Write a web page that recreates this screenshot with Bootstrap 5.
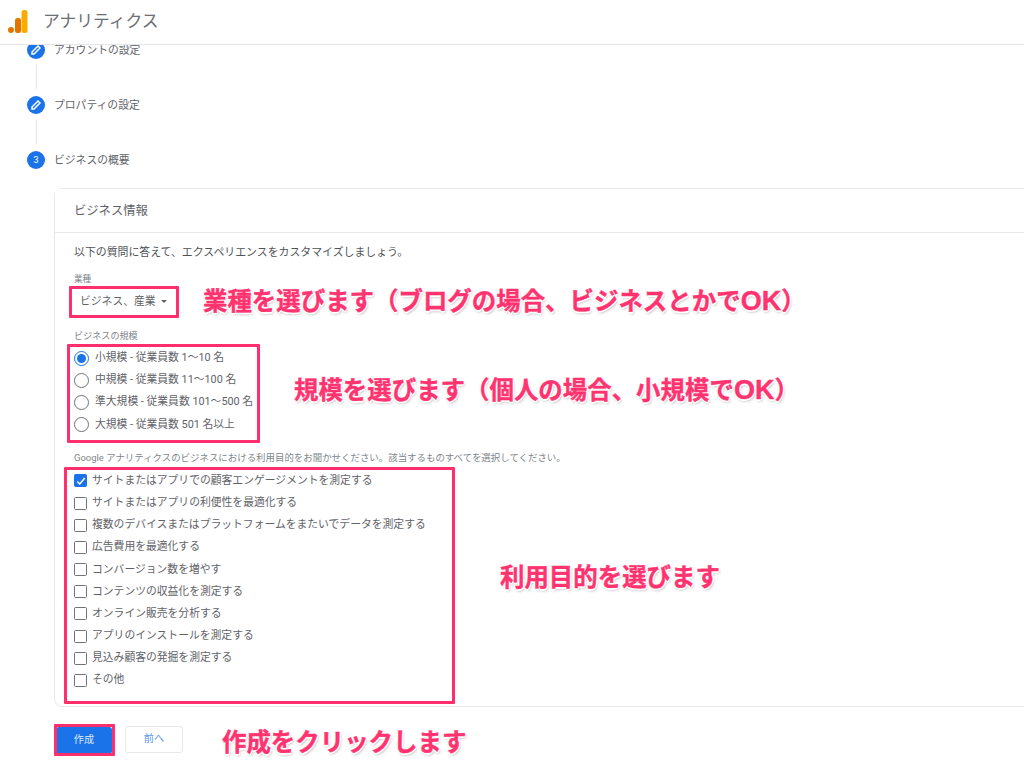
<!DOCTYPE html>
<html lang="ja">
<head>
  <meta charset="UTF-8" />
  <meta name="viewport" content="width=device-width, initial-scale=1.0" />
  <title>アナリティクス</title>
  <link href="https://cdn.jsdelivr.net/npm/bootstrap@5.3.3/dist/css/bootstrap.min.css" rel="stylesheet">
  <style>
    html, body { height: 774px; overflow: hidden; }
    body {
      position: relative;
      background: #fff;
      color: #5f6368;
      font-family: Roboto, "Noto Sans CJK JP", sans-serif;
      font-size: 10.8px;
    }
    /* top bar */
    .ga-top {
      position: relative;
      z-index: 2;
      height: 45px;
      padding-left: 8px;
      background: #fff;
      border-bottom: 1px solid #e3e5e8;
    }
    .ga-top-title { margin: 0 0 2px 15px; font-size: 16.8px; line-height: 1; color: #6b6f74; }

    /* stepper */
    .ga-main { margin-top: -4px; padding-left: 27px; }
    .ga-step { height: 18px; gap: 9px; line-height: 20px; }
    .ga-step-dot {
      width: 18px;
      height: 18px;
      flex: none;
      border-radius: 50%;
      background: #1a73e8;
      color: #fff;
      font-size: 9px;
    }
    .ga-step-line { width: 1px; height: 24px; margin: 6px 0 7px 9px; background: #e3e5e8; }

    /* business card */
    .ga-panel {
      margin: 19px -30px 0 27px;
      height: 519px;
      border: 1px solid #e6e8ea;
      border-radius: 8px;
      background: #fff;
    }
    .ga-panel .card-header {
      height: 44px;
      padding: 0 0 0 19px;
      line-height: 44px;
      font-size: 12.3px;
      color: #5f6368;
      background: #fff;
      border-bottom: 1px solid #e6e8ea;
    }
    .ga-panel .card-body { padding: 12px 0 0 19px; }
    .ga-intro { height: 16px; line-height: 16px; font-size: 10.9px; color: #4f5357; }
    .ga-label { font-size: 9.1px; line-height: 12px; color: #80868b; }
    .ga-label-kind { margin-top: 12px; font-size: 8.6px; }
    .ga-pick { height: 31px; margin: 1px 0 0 6px; gap: 4px; line-height: 31px; }
    .ga-caret { border-left: 3px solid transparent; border-right: 3px solid transparent; border-top: 3px solid #5f6368; margin-left: 1px; }
    .ga-label-size { margin-top: 13px; }
    .ga-radios { margin-top: 5px; }
    .ga-radio-row { height: 22.2px; gap: 6px; }
    .ga-radio {
      width: 15px;
      height: 15px;
      flex: none;
      border: 1.6px solid #6f7478;
      border-radius: 50%;
      background: #fff;
    }
    .ga-radio-on { border-color: #1a73e8; padding: 2px; background: #1a73e8 content-box; }
    .ga-label-use { margin-top: 16px; font-size: 9.45px; }
    .ga-checks { margin-top: 6px; }
    .ga-check-row { height: 22.2px; gap: 5px; }
    .ga-check {
      width: 13px;
      height: 13px;
      flex: none;
      border: 1.5px solid #6f7478;
      border-radius: 1.5px;
      background: #fff;
    }
    .ga-check-on { border-color: #1a73e8; background: #1a73e8; }

    /* buttons */
    .ga-actions { margin: 19px 0 0 29px; gap: 13px; }
    .ga-btn { height: 27px; padding: 0; border-radius: 3px; font-size: 10.2px; line-height: 1; }
    .ga-btn-go { width: 56px; margin-top: 1px; background: #1a73e8; border: 0; color: #dbe8fb; }
    .ga-btn-back { width: 58px; background: #fff; border: 1px solid #e6e8ea; color: #5b95ee; }

    /* pink annotations drawn over the screenshot */
    .ga-box { position: absolute; z-index: 3; border: 3px solid #ff2f6e; border-radius: 1px; }
    .ga-note {
      position: absolute;
      z-index: 3;
      margin: 0;
      font-family: "Noto Sans CJK JP", sans-serif;
      font-size: 24.45px;
      font-weight: 700;
      line-height: 1;
      white-space: nowrap;
      color: #ff3370;
      -webkit-text-stroke: .4px #ff3370;
      text-shadow: 1.5px 0 #fff, -1.5px 0 #fff, 0 1.5px #fff, 0 -1.5px #fff, 1px 1px #fff, -1px 1px #fff, 1px -1px #fff, -1px -1px #fff, 1px 2px 3px rgba(0,0,0,.35);
    }
    .ga-ok { font-family: "Liberation Sans", sans-serif; font-size: 27px; line-height: 0; }
    .ga-box-kind { left: 69px; top: 286px; width: 110px; height: 32px; }
    .ga-box-size { left: 67px; top: 344px; width: 193px; height: 99px; }
    .ga-box-use { left: 64px; top: 467px; width: 391px; height: 237px; }
    .ga-box-go { left: 54px; top: 724px; width: 61px; height: 32px; }
    .ga-note-kind { left: 203px; top: 288px; }
    .ga-note-size { left: 294px; top: 377px; }
    .ga-note-use { left: 500px; top: 564px; }
    .ga-note-go { left: 222px; top: 729px; }
  </style>
</head>
<body>
  <header class="ga-top d-flex align-items-center">
    <svg width="20" height="24" viewBox="0 0 20 24">
      <circle cx="3" cy="20" r="3" fill="#e37400"/>
      <rect x="7" y="8" width="6" height="15" rx="2.5" fill="#e37400"/>
      <rect x="13.5" y="0" width="6" height="23" rx="2.5" fill="#f9ab00"/>
    </svg>
    <div class="ga-top-title">アナリティクス</div>
  </header>

  <main class="ga-main">
    <div class="ga-step d-flex">
      <span class="ga-step-dot d-flex align-items-center justify-content-center">
        <svg width="12" height="12" viewBox="0 0 24 24" fill="none" stroke="#fff" stroke-width="3"><path d="M4 20v-4L16 4l4 4L8 20z"/></svg>
      </span>
      <span>アカウントの設定</span>
    </div>
    <div class="ga-step-line"></div>
    <div class="ga-step d-flex">
      <span class="ga-step-dot d-flex align-items-center justify-content-center">
        <svg width="12" height="12" viewBox="0 0 24 24" fill="none" stroke="#fff" stroke-width="3"><path d="M4 20v-4L16 4l4 4L8 20z"/></svg>
      </span>
      <span>プロパティの設定</span>
    </div>
    <div class="ga-step-line"></div>
    <div class="ga-step d-flex">
      <span class="ga-step-dot d-flex align-items-center justify-content-center">3</span>
      <span>ビジネスの概要</span>
    </div>

    <section class="card ga-panel">
      <div class="card-header">ビジネス情報</div>
      <div class="card-body">
        <div class="ga-intro">以下の質問に答えて、エクスペリエンスをカスタマイズしましょう。</div>

        <div class="ga-label ga-label-kind">業種</div>
        <div class="ga-pick d-flex align-items-center">ビジネス、産業 <span class="ga-caret"></span></div>

        <div class="ga-label ga-label-size">ビジネスの規模</div>
        <div class="ga-radios">
          <div class="ga-radio-row d-flex align-items-center"><span class="ga-radio ga-radio-on"></span>小規模 - 従業員数 1〜10 名</div>
          <div class="ga-radio-row d-flex align-items-center"><span class="ga-radio"></span>中規模 - 従業員数 11〜100 名</div>
          <div class="ga-radio-row d-flex align-items-center"><span class="ga-radio"></span>準大規模 - 従業員数 101〜500 名</div>
          <div class="ga-radio-row d-flex align-items-center"><span class="ga-radio"></span>大規模 - 従業員数 501 名以上</div>
        </div>

        <div class="ga-label ga-label-use">Google アナリティクスのビジネスにおける利用目的をお聞かせください。該当するものすべてを選択してください。</div>
        <div class="ga-checks">
          <div class="ga-check-row d-flex align-items-center">
            <span class="ga-check ga-check-on d-flex align-items-center justify-content-center">
              <svg width="10" height="10" viewBox="0 0 12 12" fill="none" stroke="#fff" stroke-width="1.8"><path d="M1.5 6.5l3 3 6-7"/></svg>
            </span>サイトまたはアプリでの顧客エンゲージメントを測定する
          </div>
          <div class="ga-check-row d-flex align-items-center"><span class="ga-check"></span>サイトまたはアプリの利便性を最適化する</div>
          <div class="ga-check-row d-flex align-items-center"><span class="ga-check"></span>複数のデバイスまたはプラットフォームをまたいでデータを測定する</div>
          <div class="ga-check-row d-flex align-items-center"><span class="ga-check"></span>広告費用を最適化する</div>
          <div class="ga-check-row d-flex align-items-center"><span class="ga-check"></span>コンバージョン数を増やす</div>
          <div class="ga-check-row d-flex align-items-center"><span class="ga-check"></span>コンテンツの収益化を測定する</div>
          <div class="ga-check-row d-flex align-items-center"><span class="ga-check"></span>オンライン販売を分析する</div>
          <div class="ga-check-row d-flex align-items-center"><span class="ga-check"></span>アプリのインストールを測定する</div>
          <div class="ga-check-row d-flex align-items-center"><span class="ga-check"></span>見込み顧客の発掘を測定する</div>
          <div class="ga-check-row d-flex align-items-center"><span class="ga-check"></span>その他</div>
        </div>
      </div>
    </section>

    <div class="ga-actions d-flex align-items-start">
      <button type="button" class="btn ga-btn ga-btn-go">作成</button>
      <button type="button" class="btn ga-btn ga-btn-back">前へ</button>
    </div>
  </main>

  <div class="ga-box ga-box-kind"></div>
  <div class="ga-box ga-box-size"></div>
  <div class="ga-box ga-box-use"></div>
  <div class="ga-box ga-box-go"></div>
  <p class="ga-note ga-note-kind">業種を選びます（ブログの場合、ビジネスとかで<span class="ga-ok">OK</span>）</p>
  <p class="ga-note ga-note-size">規模を選びます（個人の場合、小規模で<span class="ga-ok">OK</span>）</p>
  <p class="ga-note ga-note-use">利用目的を選びます</p>
  <p class="ga-note ga-note-go">作成をクリックします</p>

  <script src="https://cdn.jsdelivr.net/npm/bootstrap@5.3.3/dist/js/bootstrap.bundle.min.js"></script>
</body>
</html>
